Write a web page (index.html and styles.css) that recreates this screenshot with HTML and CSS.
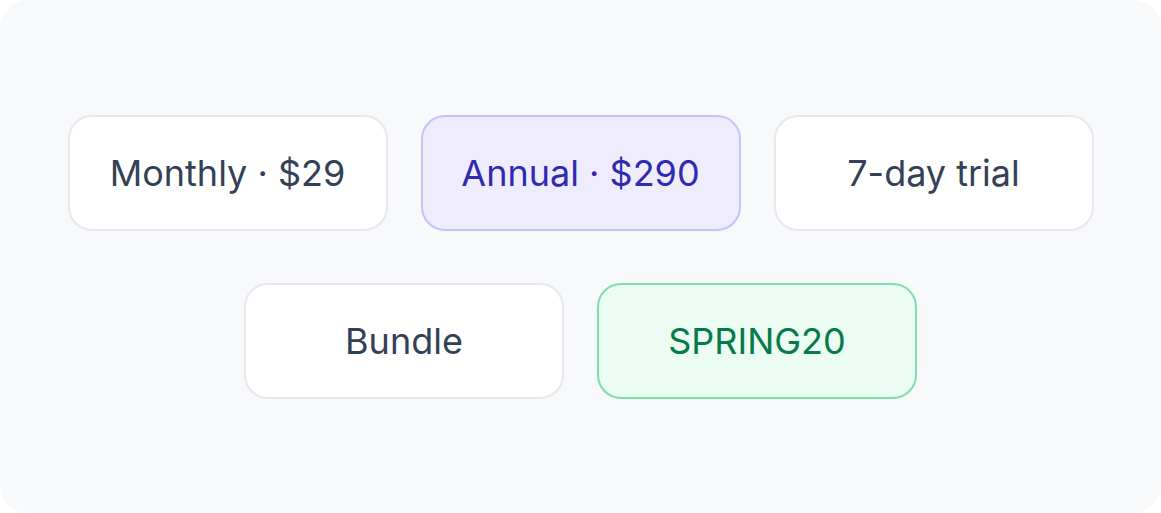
FILE: index.html
```html
<!DOCTYPE html>
<html>
<head>
<title>Plans</title>
<link rel="stylesheet" href="styles.css">
</head>
<body>
  <div class="panel">
    <div class="chips">
      <div class="chip">Monthly · $29</div>
      <div class="chip chip-selected">Annual · $290</div>
      <div class="chip">7-day trial</div>
      <div class="chip">Bundle</div>
      <div class="chip chip-promo">SPRING20</div>
    </div>
  </div>
</body>
</html>
```

FILE: styles.css
```css
html, body {
  margin: 0;
  background: #ffffff;
}

.panel {
  height: 513px;
  box-sizing: border-box;
  background-color: #f8f9fb;
  border-radius: 28px;
  display: flex;
  align-items: center;
  justify-content: center;
}

.chips {
  display: flex;
  flex-wrap: wrap;
  justify-content: center;
  column-gap: 33px;
  row-gap: 52px;
  width: 1030px;
}

.chip {
  width: 320px;
  height: 116px;
  box-sizing: border-box;
  display: flex;
  align-items: center;
  justify-content: center;
  background-color: #ffffff;
  border: 2px solid #e6e8ee;
  border-radius: 24px;
  font-family: Inter, "Noto Sans", sans-serif;
  font-size: 36px;
  color: #334155;
}

.chip-selected {
  background-color: #efedfd;
  border-color: #c6c3fb;
  color: #2f2ab0;
}

.chip-promo {
  background-color: #ebfcf2;
  border-color: #7ddfaa;
  color: #067a4b;
}
```
